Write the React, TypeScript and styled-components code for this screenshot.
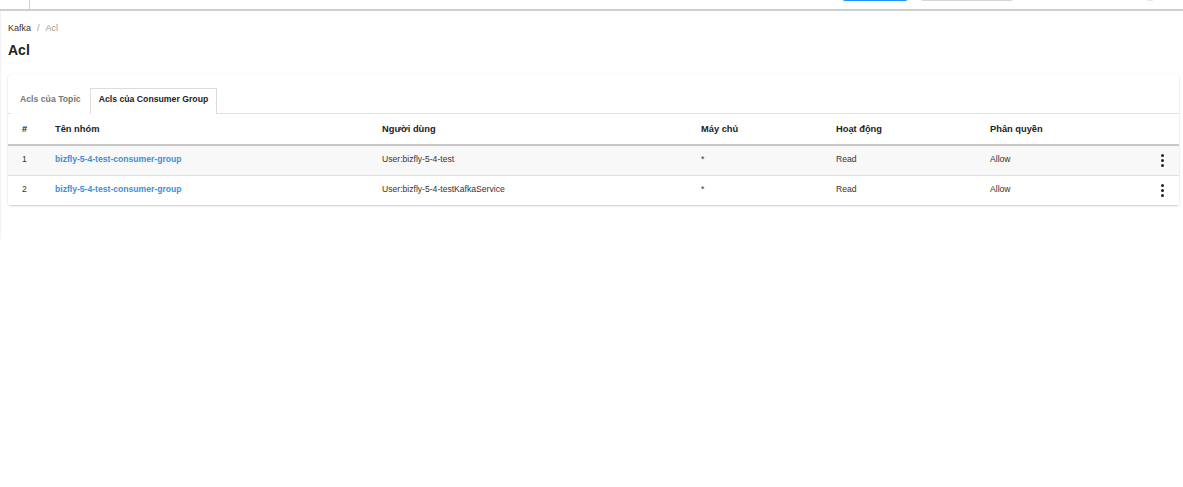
import { createGlobalStyle } from "styled-components";
import styled from "styled-components";

const GlobalStyle = createGlobalStyle`
  html, body {
    margin: 0;
    padding: 0;
    background: #fff;
    font-family: "Liberation Sans", Arial, sans-serif;
    color: #333;
  }
`;

const TopBar = styled.header`
  height: 9px;
  border-bottom: 2px solid #cfcfcf;
  display: flex;
  align-items: flex-end;
  overflow: hidden;
`;

const TopDivider = styled.div`
  width: 1px;
  height: 9px;
  margin-left: 29px;
  background: #d0d0d0;
`;

const TopSpacer = styled.div`
  flex: 1;
`;

const TopButton = styled.div<{ $primary?: boolean; $w: number }>`
  width: ${(p) => p.$w}px;
  height: 12px;
  margin-bottom: 8px;
  border-radius: 3px;
  background: ${(p) => (p.$primary ? "#1e90ff" : "#fff")};
  border: 1px solid ${(p) => (p.$primary ? "#1e90ff" : "#d6d6d6")};
  margin-right: 12px;
  box-sizing: border-box;
`;

const Avatar = styled.div`
  width: 18px;
  height: 18px;
  border-radius: 50%;
  border: 1px solid #e2e2e2;
  margin: 0 23px 8px 114px;
`;

const Body = styled.div`
  display: flex;
  min-height: 228px;
  border-left: 1px solid #f2f2f2;
`;

const Main = styled.main`
  flex: 1;
  padding: 11px 4px 0 7px;
`;

const Breadcrumb = styled.nav`
  font-size: 9px;
  display: flex;
  gap: 6px;
  height: 12px;
  line-height: 12px;
`;

const Crumb = styled.span<{ $muted?: boolean }>`
  color: ${(p) => (p.$muted ? "#999" : "#333")};
`;

const Title = styled.h1`
  margin: 8px 0 0;
  font-size: 14px;
  font-weight: 700;
  color: #222;
  line-height: 17px;
`;

const Card = styled.section`
  margin-top: 15px;
  background: #fff;
  border-radius: 3px;
  box-shadow: 0 1px 2px rgba(0, 0, 0, 0.2), 0 0 1px rgba(0, 0, 0, 0.08);
  padding-top: 14px;
`;

const Tabs = styled.div`
  display: flex;
  padding-left: 3px;
  border-bottom: 1px solid #e2e2e2;
`;

const Tab = styled.div<{ $active?: boolean }>`
  height: 21px;
  line-height: 21px;
  padding: 0 8px 4px;
  font-size: 8.7px;
  font-weight: 700;
  color: ${(p) => (p.$active ? "#222" : "#777")};
  border: 1px solid ${(p) => (p.$active ? "#dcdcdc" : "transparent")};
  border-bottom: none;
  background: #fff;
  margin-bottom: -1px;
`;

const columns = "47px 327px 319px 135px 154px 1fr 30px";

const HeadRow = styled.div`
  display: grid;
  grid-template-columns: ${columns};
  align-items: center;
  height: 30px;
  border-bottom: 2px solid #c8c8c8;
  font-size: 9.3px;
  font-weight: 700;
  color: #222;
`;

const Row = styled.div<{ $shaded?: boolean }>`
  display: grid;
  grid-template-columns: ${columns};
  align-items: center;
  height: 25px;
  padding-bottom: 4px;
  background: ${(p) => (p.$shaded ? "#f8f8f8" : "#fff")};
  font-size: 8.6px;
  color: #333;

  &:not(:last-child) {
    border-bottom: 1px solid #e0e0e0;
  }
`;

const Cell = styled.div`
  white-space: nowrap;
`;

const NumCell = styled(Cell)`
  padding-left: 14px;
`;

const GroupLink = styled.a`
  color: #3a8fd8;
  font-weight: 700;
  text-decoration: none;
  white-space: nowrap;
`;

const Kebab = styled.div`
  display: flex;
  flex-direction: column;
  align-items: center;
  gap: 2px;
  padding: 4px 4px 0 0;

  span {
    width: 3px;
    height: 3px;
    border-radius: 50%;
    background: #222;
  }
`;

const data = [
  { id: 1, group: "bizfly-5-4-test-consumer-group", user: "User:bizfly-5-4-test" },
  { id: 2, group: "bizfly-5-4-test-consumer-group", user: "User:bizfly-5-4-testKafkaService" },
];

export default function App() {
  return (
    <>
      <GlobalStyle />
      <TopBar>
        <TopDivider />
        <TopSpacer />
        <TopButton $primary $w={66} />
        <TopButton $w={94} />
        <Avatar />
      </TopBar>
      <Body>
        <Main>
          <Breadcrumb>
            <Crumb>Kafka</Crumb>
            <Crumb $muted>/</Crumb>
            <Crumb $muted>Acl</Crumb>
          </Breadcrumb>
          <Title>Acl</Title>
          <Card>
            <Tabs>
              <Tab>Acls của Topic</Tab>
              <Tab $active>Acls của Consumer Group</Tab>
            </Tabs>
            <div>
              <HeadRow>
                <NumCell>#</NumCell>
                <Cell>Tên nhóm</Cell>
                <Cell>Người dùng</Cell>
                <Cell>Máy chủ</Cell>
                <Cell>Hoạt động</Cell>
                <Cell>Phân quyền</Cell>
                <Cell />
              </HeadRow>
              {data.map((r, i) => (
                <Row key={r.id} $shaded={i === 0}>
                  <NumCell>{r.id}</NumCell>
                  <GroupLink href="#">{r.group}</GroupLink>
                  <Cell>{r.user}</Cell>
                  <Cell>*</Cell>
                  <Cell>Read</Cell>
                  <Cell>Allow</Cell>
                  <Kebab>
                    <span />
                    <span />
                    <span />
                  </Kebab>
                </Row>
              ))}
            </div>
          </Card>
        </Main>
      </Body>
    </>
  );
}
